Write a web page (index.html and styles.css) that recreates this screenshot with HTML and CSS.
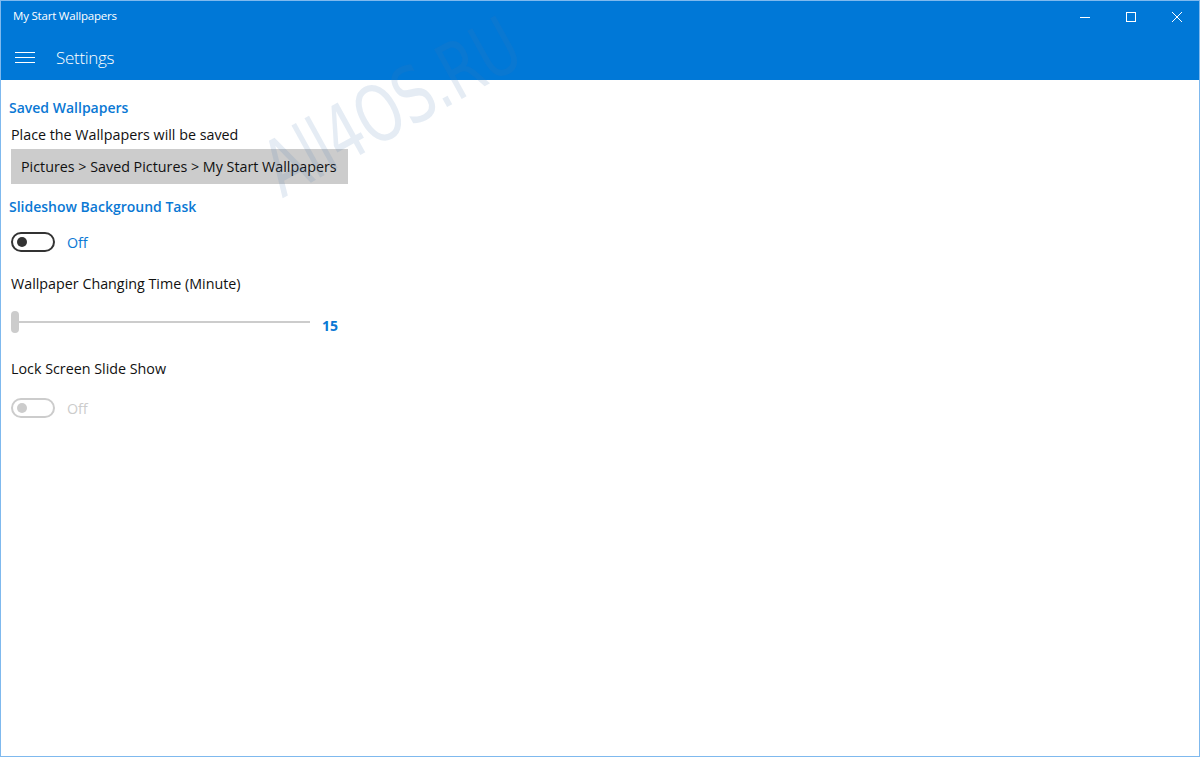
FILE: index.html
```html
<!DOCTYPE html>
<html>
<head>
<meta charset="utf-8">
<link rel="stylesheet" href="styles.css">
</head>
<body>
<div class="window">
  <div class="titlebar">
    <span class="title">My Start Wallpapers</span>
    <div class="caption-buttons">
      <span class="cap-btn"><svg width="12" height="12" viewBox="0 0 12 12"><line x1="1" y1="6.5" x2="11" y2="6.5" stroke="#fff" stroke-width="1"/></svg></span>
      <span class="cap-btn"><svg width="12" height="12" viewBox="0 0 12 12"><rect x="1.5" y="1.5" width="9" height="9" fill="none" stroke="#fff" stroke-width="1"/></svg></span>
      <span class="cap-btn"><svg width="12" height="12" viewBox="0 0 12 12"><path d="M1 1 L11 11 M11 1 L1 11" stroke="#fff" stroke-width="1"/></svg></span>
    </div>
  </div>
  <div class="navbar">
    <span class="hamburger"><svg width="20" height="12" viewBox="0 0 20 12"><path d="M0 1.5H20M0 6.5H20M0 11.5H20" stroke="#fff" stroke-width="1"/></svg></span>
    <span class="page-title">Settings</span>
  </div>
  <div class="content">
    <div class="section-title">Saved Wallpapers</div>
    <div class="label">Place the Wallpapers will be saved</div>
    <div class="path-box">Pictures &gt; Saved Pictures &gt; My Start Wallpapers</div>
    <div class="section-title second">Slideshow Background Task</div>
    <div class="toggle-row">
      <span class="toggle"><span class="knob"></span></span>
      <span class="toggle-text">Off</span>
    </div>
    <div class="label slider-label">Wallpaper Changing Time (Minute)</div>
    <div class="slider-row">
      <div class="slider">
        <span class="thumb"></span>
        <span class="track"></span>
      </div>
      <span class="slider-value">15</span>
    </div>
    <div class="label lock-label">Lock Screen Slide Show</div>
    <div class="toggle-row disabled">
      <span class="toggle"><span class="knob"></span></span>
      <span class="toggle-text">Off</span>
    </div>
  </div>
  <div class="watermark">All4OS.RU</div>
</div>
</body>
</html>
```

FILE: styles.css
```css
* { box-sizing: border-box; }
html, body {
  margin: 0;
  padding: 0;
  width: 1200px;
  height: 757px;
  overflow: hidden;
  background: #fff;
  font-family: "Open Sans", "Noto Sans", sans-serif;
}
.window {
  position: relative;
  width: 1200px;
  height: 757px;
  border: 1px solid #7fb9ee;
  display: flex;
  flex-direction: column;
  overflow: hidden;
}
.titlebar {
  height: 31px;
  background: #0078d7;
  color: #fff;
  display: flex;
  align-items: center;
  justify-content: space-between;
  padding-left: 12px;
}
.title {
  font-size: 11.5px;
  letter-spacing: -0.2px;
  margin-top: -2px;
}
.caption-buttons {
  display: flex;
  height: 100%;
}
.cap-btn {
  width: 46px;
  height: 100%;
  display: flex;
  align-items: center;
  justify-content: center;
}
.cap-btn:last-child { width: 45px; }
.navbar {
  height: 48px;
  background: #0078d7;
  color: #fff;
  display: flex;
  align-items: center;
  padding-left: 14px;
}
.hamburger {
  display: flex;
  width: 20px;
  margin-right: 21px;
  margin-top: 1px;
}
.page-title {
  font-size: 17px;
  font-weight: 300;
  letter-spacing: -0.3px;
  margin-top: 2px;
}
.content {
  padding: 18px 0 0 8px;
  display: flex;
  flex-direction: column;
  align-items: flex-start;
}
.section-title {
  color: #0a78d4;
  font-size: 14px;
  font-weight: 600;
  line-height: 19px;
}
.section-title.second {
  margin-top: 13px;
}
.label {
  margin-left: 2px;
  font-size: 14.3px;
  line-height: 19px;
  color: #111;
  margin-top: 8px;
}
.path-box {
  margin-left: 2px;
  margin-top: 5px;
  width: 337px;
  height: 35px;
  background: #cccccc;
  color: #111;
  font-size: 14.3px;
  padding-left: 10px;
  display: flex;
  align-items: center;
}
.toggle-row {
  margin-left: 2px;
  margin-top: 16px;
  display: flex;
  align-items: center;
  height: 20px;
}
.toggle {
  width: 44px;
  height: 20px;
  border: 2px solid #333;
  border-radius: 10px;
  display: flex;
  align-items: center;
  padding-left: 4px;
}
.knob {
  width: 10px;
  height: 10px;
  border-radius: 50%;
  background: #333;
}
.toggle-text {
  margin-left: 12px;
  font-size: 14.3px;
  color: #0a78d4;
}
.toggle-row.disabled .toggle { border-color: #cccccc; }
.toggle-row.disabled .knob { background: #cccccc; }
.toggle-row.disabled .toggle-text { color: #cccccc; }
.slider-label { margin-top: 22px; }
.slider-row {
  margin-left: 2px;
  margin-top: 16px;
  display: flex;
  align-items: center;
}
.slider {
  width: 299px;
  height: 24px;
  display: flex;
  align-items: center;
}
.thumb {
  width: 8px;
  height: 22px;
  border-radius: 4px;
  background: #cccccc;
}
.track {
  flex: 1;
  height: 2px;
  background: #cccccc;
}
.slider-value {
  margin-left: 12px;
  margin-top: 7px;
  font-size: 14px;
  font-weight: 700;
  color: #0a78d4;
}
.lock-label { margin-top: 24px; }
.lock-label + .toggle-row { margin-top: 20px; }
.watermark {
  position: absolute;
  left: 200px;
  top: 76px;
  width: 380px;
  text-align: center;
  font-family: "DejaVu Sans", sans-serif;
  font-size: 60px;
  letter-spacing: -1px;
  color: rgba(70, 120, 175, 0.14);
  transform: rotate(-29deg) scale(0.95, 1.3);
  transform-origin: center center;
  white-space: nowrap;
  pointer-events: none;
  line-height: 1;
}
```
